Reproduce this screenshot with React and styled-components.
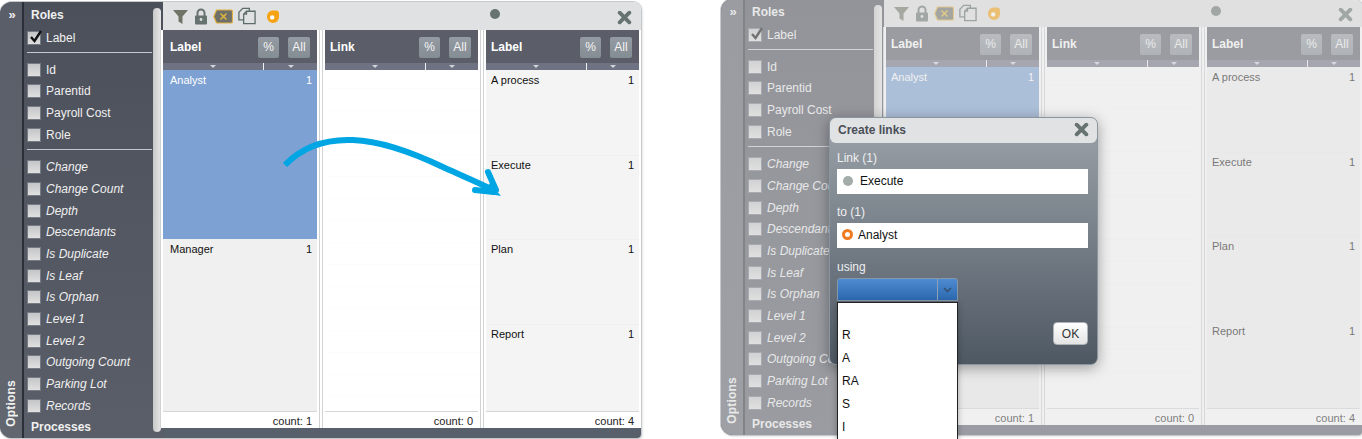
import React from "react";
import styled, { createGlobalStyle } from "styled-components";

const Global = createGlobalStyle`
  html, body { margin: 0; padding: 0; background: #fff; overflow: hidden; }
  body { font-family: "Liberation Sans", Arial, sans-serif; }
`;

const Desktop = styled.div`
  position: relative;
  width: 1362px;
  height: 439px;
  overflow: hidden;
`;

const Win = styled.section`
  position: absolute;
  left: ${p => p.$x}px;
  top: ${p => p.$y}px;
  width: ${p => p.$w}px;
  height: 436px;
  display: flex;
  border-radius: 12px 8px 4px 12px;
  overflow: hidden;
  background: #fff;
  box-shadow: 0 0 0 1px #c6cacd, 1px 1px 3px rgba(0,0,0,.2);
`;

const Dim = styled.div`
  position: absolute;
  inset: 0;
  background: rgba(223,223,223,.48);
  pointer-events: none;
`;

const Sidebar = styled.aside`
  width: 163px;
  flex: none;
  display: flex;
  background: linear-gradient(#4c505b, #5a5e68);
  color: #f0f0f0;
`;

const Strip = styled.div`
  width: 22px;
  flex: none;
  border-right: 2px solid #2b2f37;
  display: flex;
  flex-direction: column;
  justify-content: space-between;
  align-items: center;
  padding: 7px 0 11px;
  background: linear-gradient(#5a5e68, #62666f);
  box-sizing: content-box;
`;

const Chevrons = styled.span`
  font-size: 13px;
  font-weight: bold;
  line-height: 12px;
  padding-left: 2px;
`;

const OptionsLabel = styled.span`
  writing-mode: vertical-rl;
  transform: rotate(180deg);
  font-size: 12px;
  font-weight: bold;
  letter-spacing: .2px;
`;

const OptionList = styled.div`
  width: 129px;
  flex: none;
  box-sizing: border-box;
  padding: 2px 0 0 3px;
  display: flex;
  flex-direction: column;
  white-space: nowrap;
  overflow: hidden;
`;

const GroupTitle = styled.div`
  height: 23px;
  line-height: 22px;
  padding-left: 4px;
  margin-top: ${p => (p.$last ? -1 : 0)}px;
  font-size: 12px;
  font-weight: bold;
  flex: none;
`;

const Option = styled.label`
  height: 21.7px;
  display: flex;
  align-items: center;
  gap: 5px;
  font-size: 12px;
  font-style: ${p => (p.$italic ? "italic" : "normal")};
  flex: none;
`;

const Box = styled.span`
  position: relative;
  width: 12px;
  height: 12px;
  flex: none;
  background: linear-gradient(#c4c5c8, #e0e0e0);
  border: 1px solid #767a82;
  box-sizing: content-box;
`;

const Check = styled.svg`
  position: absolute;
  left: 0;
  top: -3px;
`;

const Rule = styled.hr`
  width: 125px;
  height: 1px;
  border: 0;
  background: #c5c8cd;
  margin: ${p => p.$top}px 0 6px;
  flex: none;
`;

const ScrollTrack = styled.div`
  width: 8px;
  flex: none;
  margin: 6px 2px 6px 0;
  border-radius: 4px;
  background: linear-gradient(90deg, #c8c8c8, #e6e6e6);
`;

const Main = styled.div`
  flex: 1;
  min-width: 0;
  display: flex;
  flex-direction: column;
`;

const TopBar = styled.header`
  position: relative;
  height: 28px;
  flex: none;
  display: flex;
  align-items: center;
  gap: 5px;
  padding: 0 3px 0 9px;
  background: #e0e1e3;
`;

const CopyIcon = styled.svg`
  margin-left: -1px;
`;

const RingIcon = styled.svg`
  margin-left: 5px;
`;

const Dot = styled.span`
  position: absolute;
  left: 327px;
  top: 7px;
  width: 10px;
  height: 10px;
  border-radius: 50%;
  background: #66736f;
`;

const CloseSlot = styled.span`
  display: flex;
  margin-left: auto;
  margin-right: 6px;
  margin-top: 3px;
`;

const Columns = styled.div`
  flex: 1;
  min-height: 0;
  display: grid;
  grid-template-columns: ${p => p.$tracks};
  column-gap: 8px;
  padding-left: ${p => p.$inset}px;
  background: #fff;
`;

const Column = styled.div`
  display: flex;
  flex-direction: column;
  min-height: 0;
  box-shadow: 2px 0 0 #fff, 3px 0 0 #d0d2d4, -2px 0 0 #fff, -3px 0 0 #d0d2d4;
`;

const ColHead = styled.div`
  height: 33px;
  flex: none;
  display: flex;
  align-items: center;
  padding: 0 7px 0 ${p => p.$pad}px;
  gap: 9px;
  background: #5b5e69;
  color: #fff;
`;

const ColTitle = styled.span`
  flex: 1;
  font-size: 12px;
  font-weight: bold;
`;

const ColBtn = styled.button`
  height: 21px;
  width: ${p => (p.$wide ? 22 : 21)}px;
  border: 0;
  border-radius: 2px;
  padding: 0;
  margin-top: 1px;
  font: 12px "Liberation Sans", Arial, sans-serif;
  color: #f4f4f4;
  background: linear-gradient(#949ba2, #848c94);
`;

const SortBar = styled.div`
  height: 7px;
  flex: none;
  display: grid;
  grid-template-columns: 100px 1fr;
  background: #6f7282;
`;

const SortCell = styled.span`
  display: flex;
  align-items: center;
  justify-content: center;
  & + & { border-left: 1px solid #f0f0f0; }
  &::after {
    content: "";
    border-left: 3px solid transparent;
    border-right: 3px solid transparent;
    border-top: 3px solid #d2d4da;
  }
`;

const ColBody = styled.div`
  flex: 1;
  min-height: 0;
  display: flex;
  flex-direction: column;
  background: ${p => p.$bg};
  background-image: ${p => (p.$ruled
    ? "repeating-linear-gradient(#fff 0 21px, #fcfcfc 21px 22px)"
    : "none")};
  background-position: 0 -3px;
`;

const Item = styled.div`
  height: ${p => p.$span * 84.7}px;
  box-sizing: border-box;
  flex: none;
  display: flex;
  justify-content: space-between;
  padding: 3px 5px 0 ${p => p.$pad}px;
  font-size: 11px;
  line-height: 13px;
  color: ${p => (p.$selected ? "#fff" : "#111")};
  background: ${p => (p.$selected ? "#7da1d2" : "transparent")};
  border-top: ${p => (p.$line ? "1px solid #efefef" : "1px solid transparent")};
`;

const ColFoot = styled.div`
  height: 17px;
  flex: none;
  box-sizing: border-box;
  border-top: 1px solid #d4d6d8;
  text-align: right;
  padding: 3px 5px 0;
  font-size: 11px;
  line-height: 13px;
  color: #222;
  background: #fff;
`;

const BottomBar = styled.footer`
  height: 10px;
  flex: none;
  background: #58606b;
`;

const Arrow = styled.svg`
  position: absolute;
  left: 275px;
  top: 130px;
`;

const Modal = styled.div`
  position: absolute;
  left: 829px;
  top: 117px;
  width: 269px;
  height: 248px;
  box-sizing: border-box;
  display: flex;
  flex-direction: column;
  border-radius: 7px;
  border: 1px solid #8b97a0;
  background: linear-gradient(#9ca3aa, #4e5863);
  box-shadow: 0 3px 14px rgba(0,0,0,.35);
`;

const ModalHead = styled.div`
  height: 25px;
  flex: none;
  box-sizing: border-box;
  display: flex;
  align-items: center;
  justify-content: space-between;
  padding: 0 8px 2px 8px;
  border-radius: 6px;
  background: #e1e2e4;
  color: #4b4f58;
  font-size: 12px;
  font-weight: bold;
`;

const ModalBody = styled.div`
  position: relative;
  flex: 1;
  padding: 8px 9px 0 7px;
  color: #eef0f2;
  font-size: 12px;
`;

const FieldLabel = styled.div`
  height: 14px;
  line-height: 14px;
  margin-bottom: 4px;
`;

const Field = styled.div`
  height: 25px;
  box-sizing: border-box;
  display: flex;
  align-items: center;
  padding: 0 0 2px ${p => p.$pad}px;
  gap: ${p => p.$gap}px;
  background: #fff;
  color: #111;
  margin-bottom: ${p => p.$mb}px;
`;

const GreyDot = styled.span`
  width: 10px;
  height: 10px;
  border-radius: 50%;
  background: #a3aca8;
`;

const OrangeRing = styled.span`
  width: 5px;
  height: 5px;
  border-radius: 50%;
  border: 3px solid #f07a1e;
  background: #fff;
  box-sizing: content-box;
`;

const Select = styled.div`
  width: 121px;
  height: 23px;
  box-sizing: border-box;
  display: flex;
  justify-content: flex-end;
  border: 1px solid #8498aa;
  border-radius: 3px 3px 0 0;
  background: linear-gradient(#4f8bd0, #2c68ae);
`;

const SelectCaret = styled.span`
  width: 19px;
  display: flex;
  align-items: center;
  justify-content: center;
  border-left: 1px solid #8da0b4;
`;

const Dropdown = styled.ul`
  position: absolute;
  left: 7px;
  top: 159px;
  width: 121px;
  height: 150px;
  box-sizing: border-box;
  margin: 0;
  padding: 0;
  list-style: none;
  background: #fff;
  border: 1px solid #222;
  box-shadow: 0 2px 6px rgba(0,0,0,.3);
  z-index: 2;
`;

const DropItem = styled.li`
  height: ${p => (p.$blank ? 21 : 23)}px;
  line-height: 23px;
  padding-left: 4px;
  color: #111;
  font-size: 12px;
`;

const OkButton = styled.button`
  position: absolute;
  right: 9px;
  bottom: 19px;
  width: 35px;
  height: 23px;
  border: 1px solid #aeb3b8;
  border-radius: 4px;
  padding: 0;
  color: #333;
  font: 12px "Liberation Sans", Arial, sans-serif;
  background: linear-gradient(#ffffff, #e4e4e4);
`;

const CloseIcon = ({ size = 15 }) => (
  <svg width={size} height={size} viewBox="0 0 14 14">
    <path d="M2.5 2.5 L11.5 11.5 M11.5 2.5 L2.5 11.5" stroke="#66736f" strokeWidth="3.6" strokeLinecap="round" />
  </svg>
);

const Toolbar = () => (
  <>
    <svg width="17" height="17" viewBox="0 0 17 17">
      <path d="M1 2 H16 L10.5 8.5 V16 L6.5 13.5 V8.5 Z" fill="#6f7566" />
    </svg>
    <svg width="14" height="17" viewBox="0 0 14 17">
      <path d="M3.5 8 V5 a3.5 3.5 0 0 1 7 0 V8" fill="none" stroke="#66736f" strokeWidth="2" />
      <rect x="1" y="7.5" width="12" height="9" rx="1" fill="#66736f" />
      <circle cx="7" cy="11.5" r="1.4" fill="#e0e1e3" />
    </svg>
    <svg width="20" height="15" viewBox="0 0 20 15">
      <path d="M3.5 1 H18 a1.5 1.5 0 0 1 1.5 1.5 V12.5 a1.5 1.5 0 0 1 -1.5 1.5 H3.5 L0.8 7.5 Z" fill="#6d6f68" stroke="#e0b040" strokeWidth="1.2" />
      <path d="M7.5 4.5 L13.5 10.5 M13.5 4.5 L7.5 10.5" stroke="#e6b93c" strokeWidth="1.4" />
    </svg>
    <CopyIcon width="19" height="18" viewBox="0 0 20 18">
      <path d="M7 13 H2 V5 L6 1 H13 V4" fill="none" stroke="#5f6d6a" strokeWidth="1.4" />
      <path d="M7 7 L10 4 H19 V17 H7 Z M10 4 V7 H7" fill="#e0e1e3" stroke="#5f6d6a" strokeWidth="1.4" />
    </CopyIcon>
    <RingIcon width="14" height="15" viewBox="0 0 14 15">
      <path d="M6 1.5 H10 a3 3 0 0 1 3 3 V8 a6 6 0 0 1 -6 6 a6 6 0 0 1 -6 -6 a6 6 0 0 1 5 -6.5 Z" fill="#f6a313" />
      <circle cx="6.2" cy="8.4" r="2.2" fill="#fff" />
    </RingIcon>
  </>
);

const attrs = ["Change", "Change Count", "Depth", "Descendants", "Is Duplicate", "Is Leaf", "Is Orphan", "Level 1", "Level 2", "Outgoing Count", "Parking Lot", "Records"];
const props = ["Id", "Parentid", "Payroll Cost", "Role"];

const Opt = ({ label, italic, checked }) => (
  <Option $italic={italic}>
    <Box>
      {checked && (
        <Check width="16" height="16" viewBox="0 0 16 16">
          <path d="M3 8 L6.5 12 L13 2" fill="none" stroke="#111" strokeWidth="2.4" />
        </Check>
      )}
    </Box>
    {label}
  </Option>
);

const ColumnView = ({ title, bg, items, count, lines, ruled, pad = 5 }) => (
  <Column>
    <ColHead $pad={pad}>
      <ColTitle>{title}</ColTitle>
      <ColBtn>%</ColBtn>
      <ColBtn $wide>All</ColBtn>
    </ColHead>
    <SortBar>
      <SortCell />
      <SortCell />
    </SortBar>
    <ColBody $bg={bg} $ruled={ruled}>
      {items.map((it, i) => (
        <Item key={i} $pad={pad} $span={it.span || 1} $selected={it.selected} $line={lines && i > 0}>
          <span>{it.label}</span>
          <span>{it.n}</span>
        </Item>
      ))}
    </ColBody>
    <ColFoot>count: {count}</ColFoot>
  </Column>
);

const WindowView = ({ x, y, w, dim, tracks, inset, firstPad }) => (
  <Win $x={x} $y={y} $w={w}>
    <Sidebar>
      <Strip>
        <Chevrons>»</Chevrons>
        <OptionsLabel>Options</OptionsLabel>
      </Strip>
      <OptionList>
        <GroupTitle>Roles</GroupTitle>
        <Opt label="Label" checked />
        <Rule $top={3} />
        {props.map(l => <Opt key={l} label={l} />)}
        <Rule $top={4} />
        {attrs.map(l => <Opt key={l} label={l} italic />)}
        <GroupTitle $last>Processes</GroupTitle>
      </OptionList>
      <ScrollTrack />
    </Sidebar>
    <Main>
      <TopBar>
        <Toolbar />
        <Dot />
        <CloseSlot><CloseIcon /></CloseSlot>
      </TopBar>
      <Columns $tracks={tracks} $inset={inset}>
        <ColumnView
          title="Label"
          bg="#f0f0f0"
          count={1}
          pad={firstPad}
          items={[
            { label: "Analyst", n: 1, span: 2, selected: true },
            { label: "Manager", n: 1, span: 2 },
          ]}
        />
        <ColumnView title="Link" bg="#fff" count={0} ruled items={[]} />
        <ColumnView
          title="Label"
          bg="#f4f4f4"
          count={4}
          lines
          items={[
            { label: "A process", n: 1 },
            { label: "Execute", n: 1 },
            { label: "Plan", n: 1 },
            { label: "Report", n: 1 },
          ]}
        />
      </Columns>
      <BottomBar />
    </Main>
    {dim && <Dim />}
  </Win>
);

export default function App() {
  return (
    <Desktop>
      <Global />
      <WindowView x={0} y={2} w={641} tracks="154px 153px 153px" inset={0} firstPad={7} />
      <Arrow width="240" height="80" viewBox="275 130 240 80">
        <path d="M285 165 C305 144 330 139 353 140 C385 141 420 156 445 168 C465 177 480 183 495 191" fill="none" stroke="#00a5e3" strokeWidth="6" />
        <path d="M488 172 L496 190 M475 190 L494 192" fill="none" stroke="#00a5e3" strokeWidth="6" strokeLinecap="round" />
        <path d="M490 183 L501 196 L484 193 Z" fill="#00a5e3" />
      </Arrow>
      <WindowView x={721} y={-1} w={641} dim tracks="153px 152px 153px" inset={2} firstPad={5} />
      <Modal>
        <ModalHead>
          Create links
          <CloseIcon />
        </ModalHead>
        <ModalBody>
          <FieldLabel>Link (1)</FieldLabel>
          <Field $pad={6} $gap={7} $mb={11}><GreyDot />Execute</Field>
          <FieldLabel>to (1)</FieldLabel>
          <Field $pad={5} $gap={5} $mb={12}><OrangeRing />Analyst</Field>
          <FieldLabel>using</FieldLabel>
          <Select>
            <SelectCaret>
              <svg width="9" height="6" viewBox="0 0 9 6">
                <path d="M1 1 L4.5 4.5 L8 1" fill="none" stroke="#33506e" strokeWidth="1.5" />
              </svg>
            </SelectCaret>
          </Select>
          <Dropdown>
            <DropItem $blank />
            <DropItem>R</DropItem>
            <DropItem>A</DropItem>
            <DropItem>RA</DropItem>
            <DropItem>S</DropItem>
            <DropItem>I</DropItem>
          </Dropdown>
          <OkButton>OK</OkButton>
        </ModalBody>
      </Modal>
    </Desktop>
  );
}
